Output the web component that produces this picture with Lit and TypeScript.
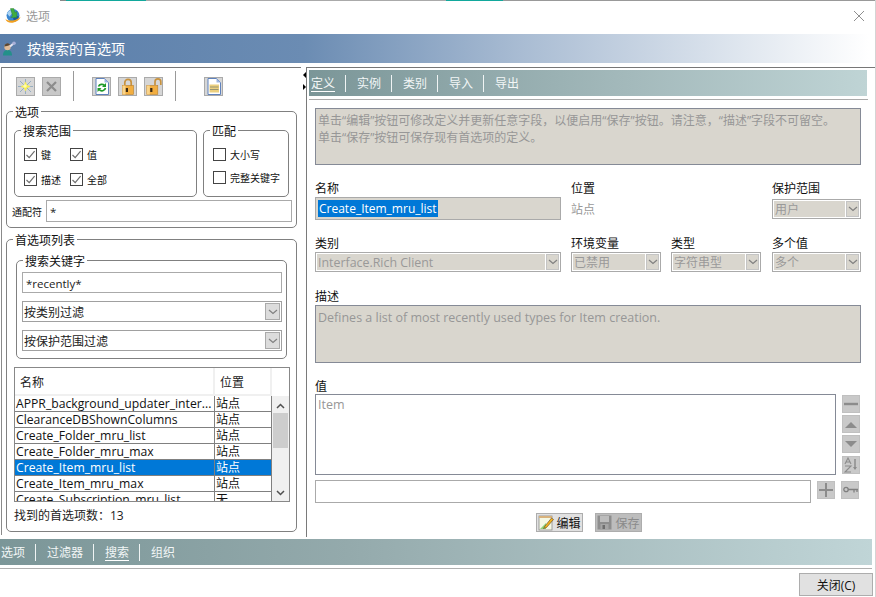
import { LitElement, html, css, svg } from "lit";
import { customElement } from "lit/decorators.js";

const ROWS: [string, string, boolean?][] = [
  ["APPR_background_updater_inter...", "站点"],
  ["ClearanceDBShownColumns", "站点"],
  ["Create_Folder_mru_list", "站点"],
  ["Create_Folder_mru_max", "站点"],
  ["Create_Item_mru_list", "站点", true],
  ["Create_Item_mru_max", "站点"],
  ["Create_Subscription_mru_list", "无"],
];

const chevron = svg`<svg class="chev" width="10" height="6" viewBox="0 0 10 6"><path d="M1 1l4 3.5L9 1" fill="none" stroke="#808080" stroke-width="1.2"/></svg>`;
const check = svg`<svg width="11" height="11" viewBox="0 0 11 11"><path d="M1.5 6l2.7 2.7L9.6 2.2" fill="none" stroke="#6e6e6e" stroke-width="1.2"/></svg>`;

@customElement("app-root")
export class AppRoot extends LitElement {
  static styles = css`
    :host { display: block; }
    * { box-sizing: border-box; }
    .app {
      width: 876px; height: 597px; background: #fff; overflow: hidden;
      display: flex; flex-direction: column;
      font-family: "Open Sans", "Noto Sans CJK SC", sans-serif; font-size: 12px; color: #111;
      border-right: 1px solid #d4d4d4;
    }
    .strip { height: 2px; display: flex; flex: none; align-items: flex-start; }
    .strip span { height: 1px; display: block; }
    .s0 { width: 60px; background: #fff; }
    .s1 { width: 6px; background: #8a8a8a; }
    .s2 { width: 80px; background: #12a89c; }
    .s3 { width: 300px; background: #aaa; }
    .s4 { width: 57px; background: #12a89c; }
    .s5 { flex: 1; background: #999; }
    .title { height: 32px; flex: none; display: flex; align-items: center; padding: 0 10px 4px 5px; color: #999; font-size: 12px; }
    .title .name { margin-left: 5px; flex: 1; }
    .title svg { display: block; }
    .head {
      height: 29px; flex: none; width: 869px; display: flex; align-items: center; padding: 0 0 1px 2px; color: #fff; font-size: 14px;
      background: linear-gradient(90deg, #5a7eaa 0%, #6b8cb3 35%, #a9bcd3 60%, #ffffff 100%);
    }
    .head .name { margin-left: 11px; }
    .main { flex: none; height: 476px; display: flex; padding-top: 4px; }

    .left { width: 300px; margin-left: 1px; flex: none; height: 468px; border-left: 1px solid #8a8a8a; border-top: 1px solid #777; padding-left: 4px; }
    .tools { height: 36px; display: flex; align-items: center; padding-left: 10px; }
    .tb { width: 19px; height: 19px; background: #d6d6d6; border: 1px solid #aaa; display: flex; align-items: center; justify-content: center; margin-right: 7px; flex: none; }
    .tb.off { background: #c8c8c8; margin-right: 0; }
    .tb.last { margin-right: 0; }
    .tb svg { display: block; }
    .sep { width: 1px; height: 30px; background: #9a9a9a; flex: none; }
    .sep1 { margin: 0 18px 0 12px; }
    .sep2 { margin: 0 28px 0 12px; }

    fieldset { margin: 0; padding: 0; border: 1px solid #808080; border-radius: 5px; min-width: 0; }
    legend { font-size: 12px; height: 14px; line-height: 18px; padding: 0 2px; margin-left: 6px; color: #111; }
    .opts { width: 291px; height: 124px; }
    .opts-row { display: flex; gap: 6px; padding: 5px 0 0 7px; }
    .range { width: 183px; height: 74px; }
    .match { width: 86px; height: 74px; }
    .cbs { display: grid; grid-template-columns: 46px 46px; grid-auto-rows: 25px; padding: 11px 0 0 9px; }
    .cbs2 { grid-template-columns: 1fr; grid-auto-rows: 23px; }
    .cb { display: flex; align-items: flex-start; gap: 4px; font-size: 10px; line-height: 15px; }
    .box { width: 13px; height: 13px; border: 1px solid #444; background: #fff; display: flex; align-items: center; justify-content: center; flex: none; }
    .box svg { display: block; }
    .wild { display: flex; align-items: center; padding: 3px 0 0 5px; font-size: 10px; }
    .wild .input { width: 246px; height: 22px; margin-left: 4px; }
    .input { border: 1px solid #aaa; background: #fff; display: flex; align-items: center; padding: 1px 0 0 3px; font-size: 11.5px; color: #222; }

    .list { width: 291px; height: 300px; margin-top: 4px; }
    .kw { width: 271px; height: 106px; margin: 7px 0 0 9px; }
    .kw-body { display: flex; flex-direction: column; gap: 8px; padding: 5px 0 0 5px; }
    .kw .input { width: 260px; height: 21px; }
    .select { display: flex; border: 1px solid #a0a0a0; background: #fff; height: 21px; align-items: center; padding-left: 1px; font-size: 12px; color: #222; }
    .select .v { flex: 1; white-space: nowrap; overflow: hidden; padding-top: 1px; }
    .select .btn { width: 15px; height: 17px; margin-right: 1px; background: #dcdcdc; border: 1px solid #aaa; display: flex; align-items: center; justify-content: center; flex: none; }
    .kw .select { width: 260px; }

    .table { width: 276px; height: 135px; margin: 8px 0 0 7px; border: 1px solid #888; overflow: hidden; display: flex; }
    .tcols { width: 257px; flex: none; }
    .thead { height: 28px; display: flex; border-bottom: 2px solid #f0f0f0; color: #222; }
    .thead div { display: flex; align-items: center; padding: 2px 0 0 5px; border-right: 2px solid #f0f0f0; }
    .thead .c1 { width: 200px; }
    .thead .c2 { width: 57px; }
    .row { display: flex; height: 16px; border-bottom: 1px solid #808080; line-height: 15px; white-space: nowrap; font-size: 12.2px; }
    .row .c1 { width: 200px; padding-left: 1px; border-right: 1px solid #808080; overflow: hidden; }
    .row .c2 { width: 57px; padding-left: 1px; border-right: 1px solid #808080; font-size: 12px; }
    .row.sel { background: #0078d7; color: #fff; }
    .sb { flex: 1; margin-top: 28px; background: #f0f0f0; display: flex; flex-direction: column; align-items: center; padding-top: 7px; }
    .sb .thumb { width: 15px; height: 35px; background: #cdcdcd; margin-top: 4px; flex: none; }
    .sb .dn { margin-top: 42px; flex: none; }
    .sb svg { flex: none; }
    .count { padding: 6px 0 0 7px; font-size: 12px; line-height: 16px; color: #222; }

    .splitter { width: 5px; flex: none; display: flex; flex-direction: column; align-items: flex-end; gap: 6px; padding-top: 5px; }
    .tri { width: 0; height: 0; border-top: 3px solid transparent; border-bottom: 3px solid transparent; }
    .tri.l { border-right: 3px solid #000; }
    .tri.r { border-left: 3px solid #000; }

    .right { width: 569px; flex: none; height: 470px; border-left: 1px solid #7a7a7a; border-top: 1px solid #777; padding: 2px 0 0 2px; }
    .tabs { display: flex; align-items: center; height: 26px; color: #f2f6f6; font-size: 12px; }
    .rtabs { width: 558px; padding-left: 2px; background: linear-gradient(90deg, #7b9698 0%, #a2b8ba 55%, #bfd4d5 100%); }
    .tabs .t { height: 18px; line-height: 20px; border-bottom: 1px solid transparent; }
    .tabs .t.on { border-bottom-color: #fff; }
    .tabs .s { width: 1px; height: 17px; background: #f0f4f4; margin: 0 11px 0 10px; }
    .rule { width: 559px; height: 1px; background: #aaa; margin-top: 3px; }
    .form { padding: 8px 0 0 6px; width: 552px; }
    .area { border: 1px solid #858a96; background: #d9d6ce; color: #979797; font-size: 12px; line-height: 17px; padding: 3px 2px; width: 546px; }
    .hint { height: 57px; white-space: nowrap; }
    .grid { display: grid; grid-template-columns: 246px 90px 90px 90px; column-gap: 10px; margin-top: 16px; }
    .lab { line-height: 16px; height: 14px; font-size: 12px; color: #111; }
    .f4 { margin-left: 1px; }
    .name-in { height: 23px; margin-top: 2px; background: #d9d6ce; border: 1px solid #aaa; padding-left: 2px; display: flex; align-items: center; font-size: 12px; }
    .selected { background: #0078d7; color: #fff; height: 17px; line-height: 17px; padding: 0 1px; }
    .site { margin-top: 6px; color: #999; line-height: 18px; font-size: 12px; }
    .dis { margin-top: 2px; height: 20px; background: #fff; border: 1px solid #aaa; padding: 1px; display: flex; gap: 1px; color: #999; font-size: 12px; }
    .dis .v { flex: 1; background: #d9d6ce; line-height: 18px; padding-left: 1px; white-space: nowrap; overflow: hidden; }
    .dis .btn { width: 13px; background: #d9d6ce; border: 1px solid #c4c4c4; display: flex; align-items: center; justify-content: center; flex: none; }
    .sel-top { margin-top: 4px; }
    .row2 { margin-top: 16px; }
    .span2 { grid-column: span 2; }
    .latin { font-size: 12.4px; }
    .desc { height: 58px; margin-top: 2px; font-size: 12.5px; }
    .gap-lab { margin-top: 17px; }
    .val-lab { margin-top: 16px; }
    .values { display: flex; margin-top: 1px; gap: 6px; }
    .vbox { width: 521px; height: 81px; border: 1px solid #858a96; color: #979797; padding: 1px 2px; font-size: 12.5px; line-height: 18px; }
    .side { display: flex; flex-direction: column; gap: 2px; padding-top: 1px; }
    .sq { width: 18px; height: 18px; background: #c9c9c9; border: 1px solid #c0c0c0; display: flex; align-items: center; justify-content: center; flex: none; }
    .sq svg { display: block; }
    .sq.gap { margin-top: 1px; }
    .addrow { display: flex; margin-top: 5px; gap: 6px; }
    .addrow .input { width: 496px; height: 23px; }
    .addrow .sq { margin-top: 1px; }
    .actions { display: flex; justify-content: center; gap: 12px; margin: 10px 0 0 1px; }
    .act { width: 47px; height: 19px; border: 1px solid #adadad; display: flex; align-items: center; padding-left: 1px; gap: 3px; font-size: 12px; background: #e1e1e1; color: #111; white-space: nowrap; flex: none; }
    .act svg { display: block; flex: none; }
    .act.off { background: #bdbdbd; color: #8a8a8a; gap: 4px; }

    .bbar { width: 872px; height: 26px; flex: none; padding-left: 1px; background: linear-gradient(90deg, #7b9698 0%, #94aaac 40%, #c0d5d7 100%); }
    .brule { width: 872px; height: 1px; background: #b0b0b0; flex: none; margin-top: 3px; }
    .foot { flex: 1; display: flex; justify-content: flex-end; align-items: flex-start; padding: 4px 2px 0 0; }
    .close { width: 74px; height: 23px; background: #e1e1e1; border: 1px solid #adadad; display: flex; align-items: center; justify-content: center; font-size: 12px; color: #111; }
  `;

  private cb(label: string, on: boolean) {
    return html`<div class="cb"><span class="box">${on ? check : ""}</span><span>${label}</span></div>`;
  }
  private sel(v: string) {
    return html`<div class="select"><span class="v">${v}</span><span class="btn">${chevron}</span></div>`;
  }
  private dis(v: string, cls = "") {
    return html`<div class="dis ${cls}"><span class="v">${v}</span><span class="btn">${chevron}</span></div>`;
  }
  private tabs(items: string[], active: string) {
    return items.map((t, i) => html`${i ? html`<span class="s"></span>` : ""}<span class="t ${t === active ? "on" : ""}">${t}</span>`);
  }

  render() {
    return html`<div class="app">
      <div class="strip"><span class="s0"></span><span class="s1"></span><span class="s2"></span><span class="s3"></span><span class="s4"></span><span class="s5"></span></div>
      <div class="title">
        <svg width="16" height="16" viewBox="0 0 16 16">
          <circle cx="8" cy="7.500" r="6.500" fill="#3a86d0"/>
          <path d="M2 5.500a6.500 6.500 0 0 1 3.500-3.500l2 3-3 3.500z" fill="#a9d2f2"/>
          <path d="M9 12.500a6.500 6.500 0 0 0 5-4l-3-1-3 3z" fill="#1c5a9c"/>
          <path d="M.3 10.500c1.500 3 10.500 3 15.200-1.800-1.400 6.300-13.800 8.800-15.200 1.800z" fill="#f3a01e"/>
          <path d="M5.500 .5h3.300l1 4 2-1v6h-6l1.700-1.800z" fill="#41ad3f" stroke="#2b7f2c" stroke-width=".4"/>
        </svg>
        <span class="name">选项</span>
        <svg width="12" height="12" viewBox="0 0 12 12"><path d="M1 1l10 10M11 1L1 11" stroke="#8f8f8f" stroke-width="1"/></svg>
      </div>
      <div class="head">
        <svg width="14" height="15" viewBox="0 0 14 15">
          <path d="M1 14.500c0-4 2-5.500 4.500-5.500S10 10.500 10 14.500z" fill="#23908a"/>
          <circle cx="5.500" cy="6" r="3.200" fill="#e0bc98"/>
          <path d="M2.300 5.500a3.200 3.200 0 0 1 6-1.500L5 5z" fill="#5a4632"/>
          <path d="M8 5.500l3.500-3" stroke="#e6e6f0" stroke-width="2"/>
          <circle cx="12" cy="2.200" r="1.800" fill="#a8b0d8"/>
        </svg>
        <span class="name">按搜索的首选项</span>
      </div>
      <div class="main">
        <div class="left">
          <div class="tools">
            <span class="tb"><svg width="17" height="17" viewBox="0 0 17 17"><path d="M8.500 1v15M1 8.500h15M3 3l11 11M14 3L3 14" stroke="#8fa8c0" stroke-width=".9"/><path d="M8.500 3.500l1.500 3.500 3.500 1.500-3.500 1.500-1.500 3.500-1.500-3.500-3.500-1.500 3.500-1.500z" fill="#f8f04a"/><circle cx="8" cy="8" r="1.800" fill="#fffbb0"/></svg></span>
            <span class="tb off"><svg width="11" height="11" viewBox="0 0 11 11"><path d="M1 1l9 9M10 1L1 10" stroke="#8c8c8c" stroke-width="2.200"/></svg></span>
            <span class="sep sep1"></span>
            <span class="tb"><svg width="14" height="17" viewBox="0 0 14 17"><path d="M1 .5h8.500l4 4v12H1z" fill="#fff" stroke="#5f82bd"/><path d="M9.500 .5v4h4z" fill="#9fb6e0"/><path d="M3.500 8.500a3.600 3.600 0 0 1 6-1M10.500 10a3.600 3.600 0 0 1-6.300 1.500" fill="none" stroke="#1f9a2a" stroke-width="1.700"/><path d="M11 5v4H7zM2.500 14v-4H6.500z" fill="#1f9a2a"/></svg></span>
            <span class="tb"><svg width="14" height="17" viewBox="0 0 14 17"><path d="M3.800 8V4.500a3.200 3.200 0 0 1 6.400 0V8" fill="none" stroke="#c8923e" stroke-width="1.700"/><rect x="1.500" y="7.500" width="11" height="9" fill="#f2ae40" stroke="#b97f2c" stroke-width=".6"/><rect x="1.500" y="7.500" width="3" height="9" fill="#f9d48a"/><rect x="4.800" y="10" width="2.200" height="4" fill="#3a2a14"/></svg></span>
            <span class="tb last"><svg width="16" height="17" viewBox="0 0 16 17"><path d="M9 7V3.800a2.900 2.900 0 0 1 5.800 0V7" fill="none" stroke="#c8923e" stroke-width="1.700"/><rect x=".8" y="7.500" width="11" height="9" fill="#f2ae40" stroke="#b97f2c" stroke-width=".6"/><rect x=".8" y="7.500" width="3" height="9" fill="#f9d48a"/><rect x="4.200" y="10" width="2.200" height="4" fill="#3a2a14"/></svg></span>
            <span class="sep sep2"></span>
            <span class="tb"><svg width="14" height="17" viewBox="0 0 14 17"><path d="M1 .5h8.500l4 4v12H1z" fill="#fff" stroke="#5f82bd"/><path d="M9.500 .5v4h4z" fill="#9fb6e0"/><rect x="2.500" y="6.500" width="9.500" height="8" fill="#eccf7e"/><path d="M3 9h8.500M3 11.500h8.500" stroke="#8f8f70" stroke-width=".9"/></svg></span>
          </div>
          <fieldset class="opts">
            <legend>选项</legend>
            <div class="opts-row">
              <fieldset class="range">
                <legend>搜索范围</legend>
                <div class="cbs">${this.cb("键", true)}${this.cb("值", true)}${this.cb("描述", true)}${this.cb("全部", true)}</div>
              </fieldset>
              <fieldset class="match">
                <legend>匹配</legend>
                <div class="cbs cbs2">${this.cb("大小写", false)}${this.cb("完整关键字", false)}</div>
              </fieldset>
            </div>
            <div class="wild"><span>通配符</span><div class="input">*</div></div>
          </fieldset>
          <fieldset class="list">
            <legend>首选项列表</legend>
            <fieldset class="kw">
              <legend>搜索关键字</legend>
              <div class="kw-body">
                <div class="input">*recently*</div>
                ${this.sel("按类别过滤")}
                ${this.sel("按保护范围过滤")}
              </div>
            </fieldset>
            <div class="table">
              <div class="tcols">
                <div class="thead"><div class="c1">名称</div><div class="c2">位置</div></div>
                ${ROWS.map(([n, p, s]) => html`<div class="row ${s ? "sel" : ""}"><div class="c1">${n}</div><div class="c2">${p}</div></div>`)}
              </div>
              <div class="sb">
                <svg width="9" height="6" viewBox="0 0 9 6"><path d="M1 5l3.500-3.500L8 5" fill="none" stroke="#505050" stroke-width="1.500"/></svg>
                <div class="thumb"></div>
                <svg class="dn" width="9" height="6" viewBox="0 0 9 6"><path d="M1 1l3.500 3.500L8 1" fill="none" stroke="#505050" stroke-width="1.500"/></svg>
              </div>
            </div>
            <div class="count">找到的首选项数：13</div>
          </fieldset>
        </div>
        <div class="splitter"><span class="tri l"></span><span class="tri r"></span></div>
        <div class="right">
          <div class="tabs rtabs">${this.tabs(["定义", "实例", "类别", "导入", "导出"], "定义")}</div>
          <div class="rule"></div>
          <div class="form">
            <div class="area hint">单击“编辑”按钮可修改定义并更新任意字段，以便启用“保存”按钮。请注意，“描述”字段不可留空。<br/>单击“保存”按钮可保存现有首选项的定义。</div>
            <div class="grid">
              <div><div class="lab">名称</div><div class="name-in"><span class="selected">Create_Item_mru_list</span></div></div>
              <div class="span2"><div class="lab">位置</div><div class="site">站点</div></div>
              <div class="f4"><div class="lab">保护范围</div><div class="sel-top">${this.dis("用户")}</div></div>
              <div class="row2"><div class="lab">类别</div>${this.dis("Interface.Rich Client", "latin")}</div>
              <div class="row2"><div class="lab">环境变量</div>${this.dis("已禁用")}</div>
              <div class="row2"><div class="lab">类型</div>${this.dis("字符串型")}</div>
              <div class="row2 f4"><div class="lab">多个值</div>${this.dis("多个")}</div>
            </div>
            <div class="lab gap-lab">描述</div>
            <div class="area desc">Defines a list of most recently used types for Item creation.</div>
            <div class="lab val-lab">值</div>
            <div class="values">
              <div class="vbox">Item</div>
              <div class="side">
                <span class="sq"><svg width="14" height="4" viewBox="0 0 14 4"><rect width="14" height="2.400" y=".8" fill="#8c8c8c"/></svg></span>
                <span class="sq"><svg width="12" height="7" viewBox="0 0 12 7"><path d="M0 7l6-6 6 6z" fill="#8c8c8c"/></svg></span>
                <span class="sq"><svg width="12" height="7" viewBox="0 0 12 7"><path d="M0 0l6 6 6-6z" fill="#8c8c8c"/></svg></span>
                <span class="sq gap"><svg width="16" height="16" viewBox="0 0 16 16"><path d="M2 7l3-6 3 6M3 5h4M2 9h6L2 15h6" fill="none" stroke="#8c8c8c" stroke-width="1.100"/><path d="M12 2v10" stroke="#8c8c8c" stroke-width="1.500"/><path d="M10 10l2 3 2-3z" fill="#8c8c8c"/></svg></span>
              </div>
            </div>
            <div class="addrow">
              <div class="input"></div>
              <span class="sq"><svg width="14" height="14" viewBox="0 0 14 14"><path d="M7 0v14M0 7h14" stroke="#8c8c8c" stroke-width="2"/></svg></span>
              <span class="sq"><svg width="15" height="8" viewBox="0 0 15 8"><circle cx="3" cy="3.500" r="2.200" fill="none" stroke="#808080" stroke-width="1.300"/><path d="M5 3.500h10M11 3.500v3M14 3.500v2.500" stroke="#808080" stroke-width="1.300" fill="none"/></svg></span>
            </div>
            <div class="actions">
              <div class="act">
                <svg width="16" height="16" viewBox="0 0 16 16"><rect x="1" y="1" width="13" height="14" fill="#f4f8e4" stroke="#8c8c8c" stroke-width=".8"/><path d="M1 1h13v2H1z" fill="#d8b27c"/><path d="M2 14h6V8z" fill="#8fd27a"/><path d="M7 11l6.500-8 2 1.500-7 8-3 1z" fill="#f2b21d" stroke="#5a4420" stroke-width=".6"/></svg>
                <span>编辑</span>
              </div>
              <div class="act off">
                <svg width="15" height="15" viewBox="0 0 15 15"><path d="M.5.500h14v14H.5z" fill="#8e8e8e"/><rect x="3" y="1" width="9" height="6" fill="#bdbdbd"/><rect x="3.500" y="9" width="8" height="5.500" fill="#a6a6a6"/><rect x="5.500" y="10" width="2.500" height="4" fill="#6e6e6e"/></svg>
                <span>保存</span>
              </div>
            </div>
          </div>
        </div>
      </div>
      <div class="tabs bbar">${this.tabs(["选项", "过滤器", "搜索", "组织"], "搜索")}</div>
      <div class="brule"></div>
      <div class="foot"><div class="close">关闭(C)</div></div>
    </div>`;
  }
}
